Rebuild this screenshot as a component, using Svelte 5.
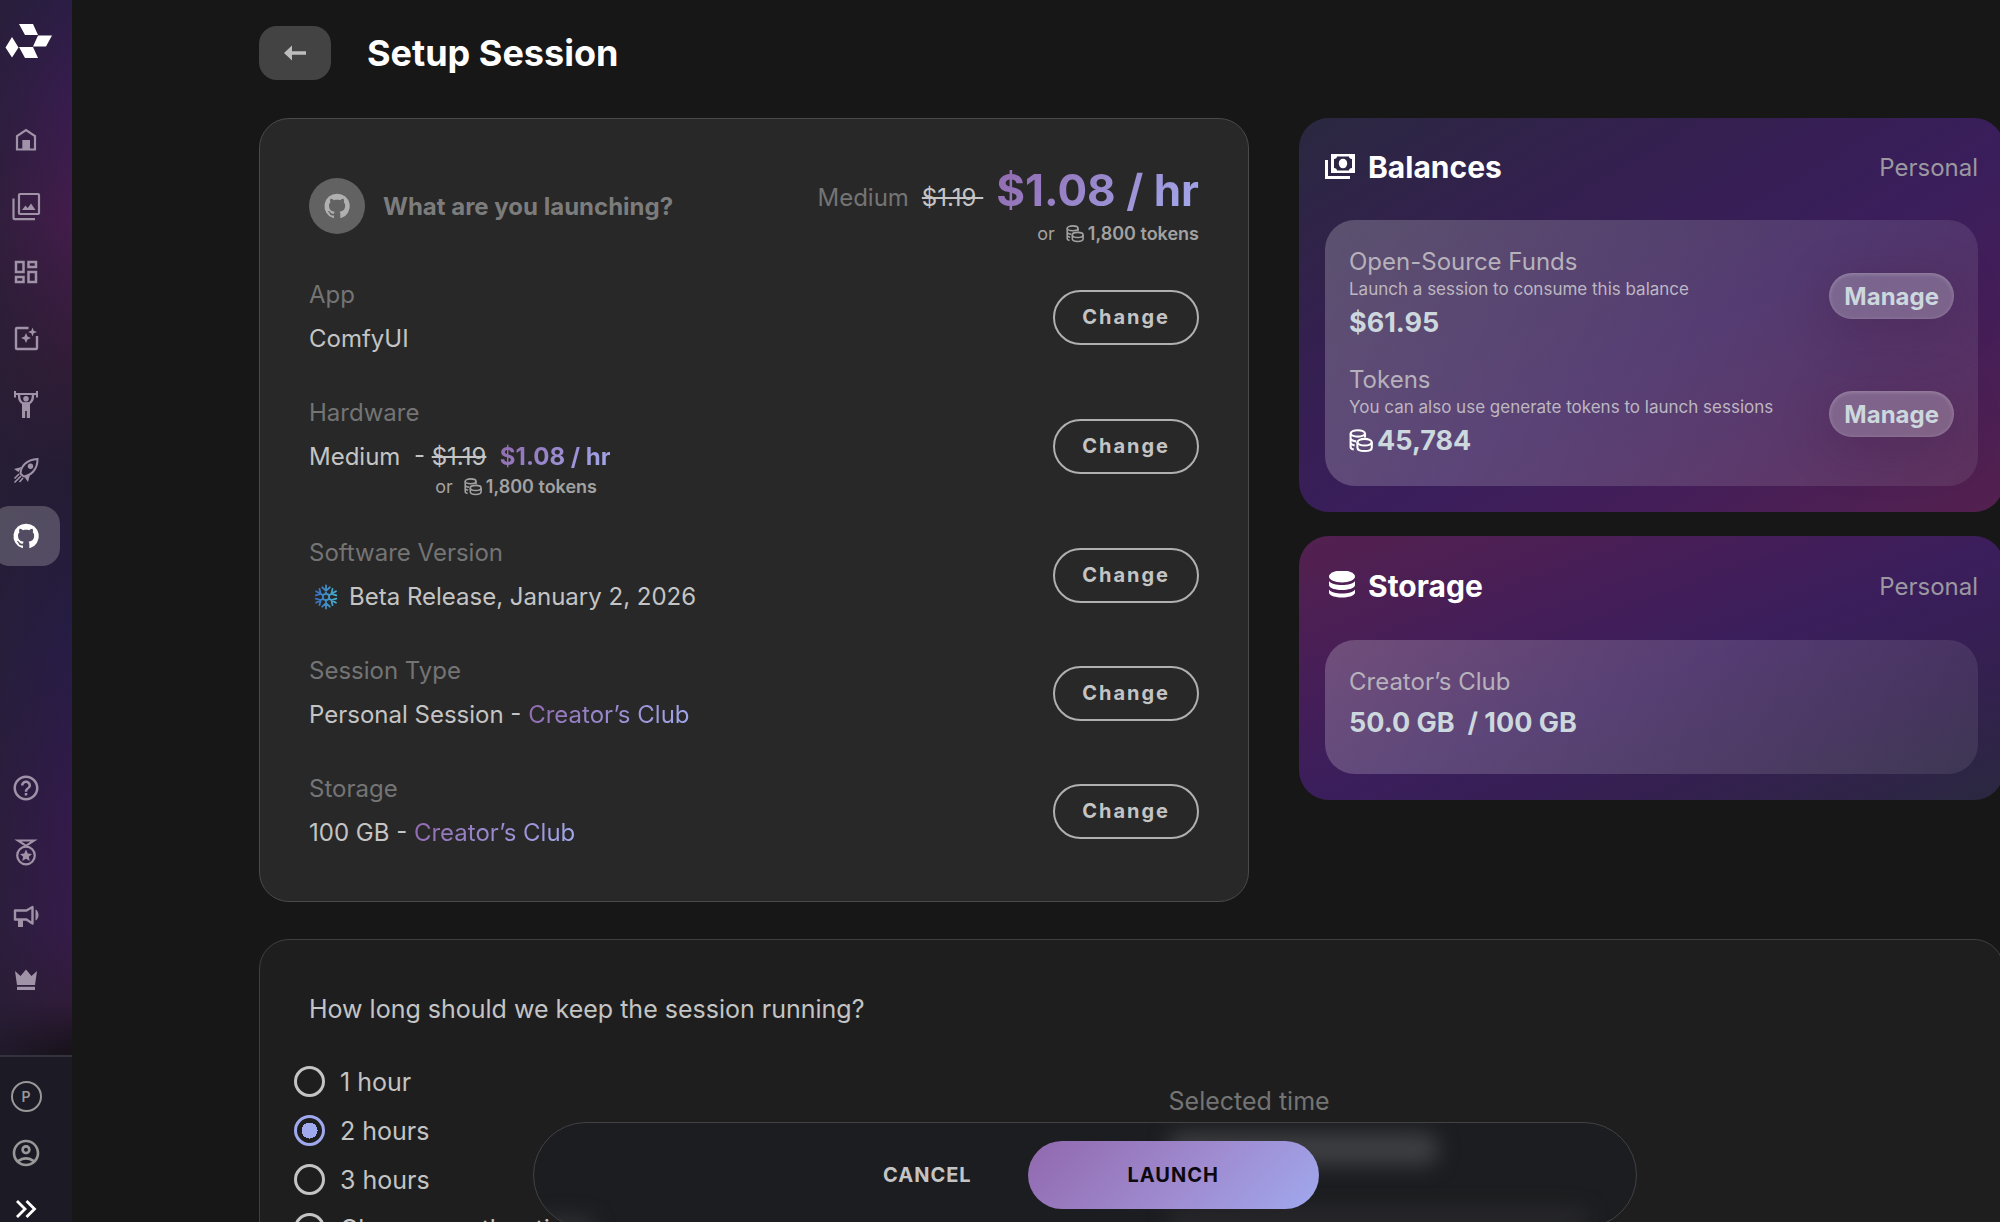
<script lang="ts">
  interface Item {
    icon: string;
    label: string;
    active?: boolean;
  }

  const navItems: Item[] = [
    { icon: "home", label: "Home" },
    { icon: "gallery", label: "Gallery" },
    { icon: "dashboard", label: "Dashboard" },
    { icon: "generate", label: "Generate" },
    { icon: "train", label: "Training" },
    { icon: "rocket", label: "Deploy" },
    { icon: "github", label: "Open source", active: true },
  ];

  const helpItems: Item[] = [
    { icon: "help", label: "Help" },
    { icon: "medal", label: "Rewards" },
    { icon: "campaign", label: "News" },
    { icon: "crown", label: "Upgrade" },
  ];

  const durations = ["1 hour", "2 hours", "3 hours", "Choose another time"];

  let duration = $state("2 hours");

  // one snowflake arm with its two barbs, turned by the given angle
  function flakeArm(degrees: number): string {
    const a = (degrees * Math.PI) / 180;
    const sin = Math.sin(a);
    const cos = Math.cos(a);
    const at = (r: number, side = 0) => `${13 + r * sin + side * cos} ${13 - r * cos + side * sin}`;
    return `M${at(3.2)}L${at(11.5)}M${at(9.7, -3.8)}L${at(6.2)}L${at(9.7, 3.8)}`;
  }
</script>

{#snippet icon(name: string, size = 30)}
  <svg class="icon" width={size} height={size} viewBox="0 0 30 30" fill="currentColor" aria-hidden="true">
    {#if name === "home"}
      <path d="M6 24.5V11.2L15 5l9 6.200v13.300z" fill="none" stroke="currentColor" stroke-width="2.200" />
      <path d="M11.300 15h7.700v9.500h-7.700z" />
    {:else if name === "gallery"}
      <rect x="8" y="3" width="20" height="20" rx="1" fill="none" stroke="currentColor" stroke-width="2.200" />
      <path d="M2.500 7.500V27a1.200 1.200 0 0 0 1.200 1.200H24" fill="none" stroke="currentColor" stroke-width="2.200" />
      <path d="M11 19l3.500-4.500 2.200 2.500 3.300-4.500L24.500 19z" />
    {:else if name === "dashboard"}
      <path
        transform="scale(1.25)"
        d="M19 5v2h-4V5h4M9 5v6H5V5h4m10 8v6h-4v-6h4M9 17v2H5v-2h4M21 3h-8v6h8V3zM11 3H3v10h8V3zm10 8h-8v10h8V11zm-10 4H3v6h8v-6z"
      />
    {:else if name === "generate"}
      <path d="M17.500 5H6a1 1 0 0 0-1 1v19a1 1 0 0 0 1 1h19a1 1 0 0 0 1-1V13" fill="none" stroke="currentColor" stroke-width="2.400" />
      <path d="M15 10l1.500 3.500 3.500 1.500-3.500 1.500L15 20l-1.500-3.500L10 15l3.500-1.500zM21.500 4.500l1.200 3.300 3.300 1.200-3.300 1.200-1.200 3.300-1.200-3.300L17 9l3.300-1.200z" />
    {:else if name === "train"}
      <path d="M3 2h2v2h20V2h2v6.500h-2V6H5v2.500H3z" />
      <circle cx="15" cy="9.800" r="2.800" />
      <path d="M8 6c0 5 1.500 7.500 4.500 8.500h5C20.500 13.500 22 11 22 6" fill="none" stroke="currentColor" stroke-width="2.400" />
      <path d="M11 13.500h8V29h-3.200v-7h-1.600v7H11z" />
    {:else if name === "rocket"}
      <path d="M11.500 20.500L9.500 18.500c.3-7 6-14 17-14.500.2 11-7 16.500-13.500 17.500z" fill="none" stroke="currentColor" stroke-width="2" />
      <circle cx="19.500" cy="11.200" r="2.700" />
      <path d="M10.500 12L3 14l4.500 3zM19 19.500L17 27l-3.200-4.500z" />
      <path d="M8 19l-4.500 4.500M10 21l-6.500 6.500M12 23l-3.500 4" fill="none" stroke="currentColor" stroke-width="1.600" />
    {:else if name === "github"}
      <path
        transform="translate(1.400 1.200) scale(1.140)"
        d="M12 1.270a11 11 0 00-3.480 21.460c.55.09.73-.28.73-.55v-1.840c-3.030.64-3.670-1.460-3.670-1.460-.55-1.290-1.280-1.650-1.280-1.650-.92-.65.1-.65.1-.65 1.100 0 1.730 1.100 1.730 1.100.92 1.650 2.570 1.200 3.210.92a2 2 0 01.64-1.470c-2.470-.27-5.040-1.190-5.040-5.500 0-1.100.46-2.100 1.200-2.840a3.760 3.760 0 010-2.930s.91-.28 3.110 1.100c1.800-.49 3.700-.49 5.500 0 2.100-1.380 3.020-1.100 3.020-1.100a3.760 3.760 0 01.1 2.930c.83.74 1.200 1.740 1.200 2.940 0 4.210-2.570 5.130-5.040 5.400.45.37.82.92.82 2.020v3.030c0 .27.1.64.73.55A11 11 0 0012 1.270"
      />
    {:else if name === "help"}
      <path
        transform="scale(1.25)"
        d="M11 18h2v-2h-2v2zm1-16C6.480 2 2 6.480 2 12s4.480 10 10 10 10-4.480 10-10S17.520 2 12 2zm0 18c-4.410 0-8-3.590-8-8s3.590-8 8-8 8 3.590 8 8-3.590 8-8 8zm0-14c-2.210 0-4 1.790-4 4h2c0-1.100.9-2 2-2s2 .9 2 2c0 2-3 1.750-3 5h2c0-2.250 3-2.500 3-5 0-2.210-1.790-4-4-4z"
      />
    {:else if name === "medal"}
      <circle cx="15" cy="18.500" r="8.800" fill="none" stroke="currentColor" stroke-width="2.200" />
      <path d="M7 3.500h16L15 8.800z" fill="none" stroke="currentColor" stroke-width="2.200" />
      <path d="M15 12.500l1.800 4 4.200.4-3.200 2.800 1 4.300-3.800-2.200-3.800 2.200 1-4.300L9 16.900l4.200-.4z" />
    {:else if name === "campaign"}
      <path d="M4 9.500h11.500l6-3.500v16.500l-6-4H4z" fill="none" stroke="currentColor" stroke-width="2.400" stroke-linejoin="round" />
      <path d="M7 19h5v7H7zM24.500 8.500c4 1.500 4 9.500 0 11z" />
    {:else if name === "crown"}
      <path d="M4 6l5.500 5L15 4.500l5.500 6.500L26 6l-2 14H6zM6 21.800h18V25H6z" />
    {:else if name === "account"}
      <path
        transform="scale(1.25)"
        d="M12 2C6.480 2 2 6.480 2 12s4.480 10 10 10 10-4.480 10-10S17.520 2 12 2M7.350 18.500C8.660 17.560 10.260 17 12 17s3.340.56 4.650 1.500c-1.310.94-2.910 1.500-4.650 1.500s-3.340-.56-4.650-1.500m10.790-1.380C16.450 15.800 14.320 15 12 15s-4.450.8-6.140 2.120C4.700 15.730 4 13.950 4 12c0-4.420 3.580-8 8-8s8 3.580 8 8c0 1.950-.7 3.730-1.860 5.120M12 6c-1.930 0-3.500 1.570-3.500 3.500S10.070 13 12 13s3.500-1.570 3.500-3.500S13.930 6 12 6m0 5c-.83 0-1.500-.67-1.500-1.500S11.170 8 12 8s1.500.67 1.500 1.500S12.830 11 12 11"
      />
    {:else if name === "expand"}
      <path d="M6 7l8 8-8 8M15.500 7l8 8-8 8" fill="none" stroke="currentColor" stroke-width="2.800" />
    {:else if name === "back"}
      <path d="M4 15l8-7.500v5.800h14v3.400H12v5.800z" />
    {:else if name === "coins"}
      <g fill="none" stroke="currentColor" stroke-width="2.600">
        <ellipse cx="11" cy="5.500" rx="9" ry="4" />
        <path d="M2 5.500v17c0 1.500 1.500 2.800 4 3.200M2 12c.5 1.500 3 3 7 3.500M2 17.500c.5 1.500 1.500 2.300 5 3M20 5.500v5" />
        <ellipse cx="19.500" cy="16.500" rx="9" ry="4.200" />
        <path d="M10.500 16.500V23c0 6 18 6 18 0v-6.500" />
      </g>
    {:else if name === "payments"}
      <path fill-rule="evenodd" d="M6 2h24v19H6zM9 7v9c1.800 0 3 1 3 2.500h12c0-1.500 1.200-2.500 3-2.500V7c-1.800 0-3-1-3-2.500H12C12 6 10.800 7 9 7z" />
      <ellipse cx="18" cy="11.500" rx="4.200" ry="4.800" />
      <path d="M0 8h3v16h22v3H0z" />
    {:else if name === "database"}
      <ellipse cx="17" cy="5.500" rx="13" ry="6" />
      <path d="M4 10c3 5.300 23 5.300 26 0v4.500c-2 6-24 6-26 0zM4 18.500c3 5.300 23 5.300 26 0V22c-2 6-24 6-26 0z" />
    {/if}
  </svg>
{/snippet}

{#snippet navLink(item: Item)}
  <a href="#{item.icon}" class="nav-link" class:active={item.active} aria-label={item.label}>
    {@render icon(item.icon)}
  </a>
{/snippet}

{#snippet tokens()}
  <div class="tokens">
    <span>or</span>
    <strong>{@render icon("coins", 18)}1,800 tokens</strong>
  </div>
{/snippet}

{#snippet changeButton(what: string)}
  <button type="button" class="change" aria-label="Change {what}">Change</button>
{/snippet}

<div class="app">
  <aside class="sidebar">
    <a href="#top" class="logo" aria-label="Start page">
      <svg width="48" height="36" viewBox="0 0 48 36" fill="#fff" aria-hidden="true">
        <path d="M14 0h14l5 11H20zM33 11.500h14L41 22.500H28zM7 13l6.500 10.500L7 33.500.5 23.500zM14 23h14l5 11H20z" />
      </svg>
    </a>
    <nav class="nav-main" aria-label="Main">
      {#each navItems as item}
        {@render navLink(item)}
      {/each}
    </nav>
    <nav class="nav-help" aria-label="Help">
      {#each helpItems as item}
        {@render navLink(item)}
      {/each}
    </nav>
    <div class="sidebar-footer">
      <button type="button" class="workspace" aria-label="Personal workspace">P</button>
      <button type="button" aria-label="Account">{@render icon("account", 32)}</button>
      <button type="button" class="expand" aria-label="Expand menu">{@render icon("expand")}</button>
    </div>
  </aside>

  <main>
    <header>
      <button type="button" class="back" aria-label="Back">{@render icon("back")}</button>
      <h1>Setup Session</h1>
    </header>

    <div class="columns">
      <section class="card setup">
        <div class="setup-head">
          <span class="avatar">{@render icon("github")}</span>
          <h2>What are you launching?</h2>
          <div class="price">
            <div class="price-line">
              <span class="muted">Medium</span>
              <s>$1.19&nbsp;</s>
              <span class="amount gradient">$1.08 / hr</span>
            </div>
            {@render tokens()}
          </div>
        </div>

        <div class="row">
          <div>
            <div class="label">App</div>
            <div class="value">ComfyUI</div>
          </div>
          {@render changeButton("app")}
        </div>
        <div class="row">
          <div>
            <div class="label">Hardware</div>
            <div class="value">
              Medium&nbsp; - <s>$1.19</s>&nbsp; <strong class="gradient">$1.08 / hr</strong>
            </div>
            <div class="row-tokens">{@render tokens()}</div>
          </div>
          {@render changeButton("hardware")}
        </div>
        <div class="row">
          <div>
            <div class="label">Software Version</div>
            <div class="value version">
              <svg width="26" height="26" viewBox="0 0 26 26" fill="none" stroke="url(#frost)" stroke-width="1.800" stroke-linecap="round" aria-hidden="true">
                <defs>
                  <linearGradient id="frost" gradientUnits="userSpaceOnUse" x1="0" y1="13" x2="26" y2="13">
                    <stop offset="0" stop-color="#3565c0" />
                    <stop offset="1" stop-color="#4ab8d0" />
                  </linearGradient>
                </defs>
                <circle cx="13" cy="13" r="3.200" />
                {#each [0, 60, 120, 180, 240, 300] as angle}
                  <path d={flakeArm(angle)} />
                {/each}
              </svg>
              Beta Release, January 2, 2026
            </div>
          </div>
          {@render changeButton("software version")}
        </div>
        <div class="row">
          <div>
            <div class="label">Session Type</div>
            <div class="value">Personal Session - <span class="gradient">Creator’s Club</span></div>
          </div>
          {@render changeButton("session type")}
        </div>
        <div class="row">
          <div>
            <div class="label">Storage</div>
            <div class="value">100 GB - <span class="gradient">Creator’s Club</span></div>
          </div>
          {@render changeButton("storage")}
        </div>
      </section>

      <div class="side">
        <section class="panel balances">
          <div class="panel-head">
            {@render icon("payments")}
            <h2>Balances</h2>
            <span>Personal</span>
          </div>
          <div class="glass">
            <div class="balance">
              <div>
                <div class="name">Open-Source Funds</div>
                <div class="hint">Launch a session to consume this balance</div>
                <div class="total">$61.95</div>
              </div>
              <button type="button" class="manage" aria-label="Manage funds">Manage</button>
            </div>
            <div class="balance">
              <div>
                <div class="name">Tokens</div>
                <div class="hint">You can also use generate tokens to launch sessions</div>
                <div class="total">{@render icon("coins", 24)}45,784</div>
              </div>
              <button type="button" class="manage" aria-label="Manage tokens">Manage</button>
            </div>
          </div>
        </section>

        <section class="panel storage">
          <div class="panel-head">
            {@render icon("database")}
            <h2>Storage</h2>
            <span>Personal</span>
          </div>
          <div class="glass">
            <div class="name">Creator’s Club</div>
            <div class="total">50.0 GB&nbsp; / 100 GB</div>
          </div>
        </section>
      </div>
    </div>

    <section class="card duration">
      <p id="duration-question">How long should we keep the session running?</p>
      <div class="duration-body">
        <div class="options" role="radiogroup" aria-labelledby="duration-question">
          {#each durations as option}
            <label>
              <input type="radio" name="duration" value={option} bind:group={duration} />
              {option}
            </label>
          {/each}
        </div>
        <div class="selected">Selected time</div>
      </div>
    </section>
  </main>

  <div class="action-bar">
    <span class="haze haze-time"></span>
    <span class="haze haze-note"></span>
    <span class="haze haze-option"></span>
    <button type="button" class="cancel">CANCEL</button>
    <button type="button" class="launch">LAUNCH</button>
  </div>
</div>

<style>
  :global(body) {
    background: #171717;
  }
  .app {
    display: flex;
    height: 100vh;
    overflow: hidden;
    position: relative;
    font-family: Inter, "Liberation Sans", sans-serif;
    font-size: 24px;
    color: #c4c4c4;
  }
  button {
    border: 0;
    padding: 0;
    background: none;
    color: inherit;
    font: inherit;
    cursor: pointer;
  }
  h1,
  h2,
  p {
    margin: 0;
  }
  .icon {
    display: block;
    flex: none;
  }
  strong {
    font-weight: 700;
  }

  .sidebar {
    flex: none;
    width: 72px;
    display: flex;
    flex-direction: column;
    background:
      linear-gradient(90deg, rgba(38, 31, 52, 0.6), rgba(38, 31, 52, 0)),
      linear-gradient(
        180deg,
        #2b1d45 0%,
        #371c4e 8%,
        #431c4b 18%,
        #311c36 30%,
        #241c34 39%,
        #261c44 52%,
        #321a4a 66%,
        #351b49 76%,
        #301b3a 82%,
        #18121c 86%
      );
  }
  .logo {
    height: 36px;
    padding: 24px 0 50px 5px;
  }
  .logo svg {
    display: block;
  }
  .nav-main,
  .nav-help {
    display: flex;
    flex-direction: column;
    gap: 6px;
  }
  .nav-help {
    gap: 4px;
    margin-top: auto;
    padding-bottom: 45px;
  }
  .nav-link {
    display: flex;
    align-items: center;
    justify-content: center;
    width: 68px;
    height: 60px;
    margin-left: -8px;
    border-radius: 18px;
    color: #a093a8;
  }
  .nav-link.active {
    background: rgba(255, 255, 255, 0.21);
    color: #fff;
  }
  .sidebar-footer {
    display: flex;
    flex-direction: column;
    align-items: center;
    gap: 25px;
    width: 52px;
    height: 141px;
    padding: 24px 20px 0 0;
    border-top: 2px solid #34323c;
    background: #1b1a25;
    color: #989898;
  }
  .workspace {
    flex: none;
    box-sizing: border-box;
    width: 31px;
    height: 31px;
    border: 2px solid #989898;
    border-radius: 50%;
    font-size: 14px;
    font-weight: 600;
  }
  .expand {
    color: #fff;
  }

  main {
    flex: 1;
    min-width: 0;
    padding: 26px 0 0 187px;
    margin-right: -4px;
  }
  header {
    display: flex;
    align-items: center;
    gap: 36px;
    height: 54px;
    margin-bottom: 38px;
  }
  .back {
    display: flex;
    align-items: center;
    justify-content: center;
    width: 72px;
    height: 54px;
    border-radius: 18px;
    background: #434343;
    color: #bdbdbd;
  }
  h1 {
    font-size: 36px;
    font-weight: 700;
    color: #fff;
  }
  .columns {
    display: grid;
    grid-template-columns: 990fr 705fr;
    gap: 50px;
    align-items: start;
  }
  .card {
    border: 1px solid #4a4a4a;
    border-radius: 30px;
    background: #282828;
  }
  .setup {
    display: flex;
    flex-direction: column;
    gap: 30px;
    padding: 46px 49px;
  }
  .setup-head {
    display: flex;
    align-items: center;
    gap: 18px;
    height: 78px;
  }
  .avatar {
    display: flex;
    align-items: center;
    justify-content: center;
    width: 56px;
    height: 56px;
    margin-top: 4px;
    border-radius: 50%;
    background: #626262;
    color: #b0b0b0;
  }
  .setup-head h2 {
    margin-top: 4px;
    font-size: 24px;
    font-weight: 700;
    color: #7c7c7c;
  }
  .price {
    margin-left: auto;
  }
  .price .tokens {
    margin-top: 6px;
  }
  .price-line {
    display: flex;
    align-items: baseline;
    justify-content: flex-end;
    gap: 13px;
  }
  .muted,
  .label {
    color: #747474;
  }
  .amount {
    font-size: 44px;
    font-weight: 700;
    line-height: 54px;
  }
  .gradient {
    background: linear-gradient(135deg, #9168ae, #a3abee);
    background-clip: text;
    color: transparent;
  }
  .tokens {
    display: flex;
    align-items: center;
    justify-content: flex-end;
    gap: 11px;
    font-size: 18px;
    line-height: 22px;
    color: #a2a2a2;
  }
  .tokens strong {
    display: flex;
    align-items: center;
    gap: 4px;
    font-weight: 600;
  }
  .row {
    display: flex;
    align-items: center;
    justify-content: space-between;
  }
  .label,
  .value {
    line-height: 44px;
  }
  .version {
    display: flex;
    align-items: center;
    gap: 10px;
    padding-left: 4px;
  }
  .row-tokens {
    width: 288px;
    margin-top: -3px;
    padding-bottom: 3px;
  }
  .change {
    box-sizing: border-box;
    height: 55px;
    padding: 0 27px;
    border: 2px solid #b0b0b0;
    border-radius: 28px;
    font-size: 20px;
    font-weight: 700;
    letter-spacing: 2px;
  }

  .side {
    display: flex;
    flex-direction: column;
    gap: 24px;
  }
  .panel {
    padding: 0 26px 26px;
    border-radius: 30px;
  }
  .balances {
    background: linear-gradient(150deg, #2a2840 0%, #34204f 28%, #3a1e5c 55%, #451e58 75%, #54214f 100%);
  }
  .storage {
    background: linear-gradient(160deg, #54214f 0%, #461e58 30%, #3a1e5c 52%, #34204f 75%, #2a2840 100%);
  }
  .panel-head {
    display: flex;
    align-items: center;
    gap: 13px;
    height: 98px;
    padding-bottom: 4px;
    color: #fff;
  }
  .storage .panel-head {
    height: 100px;
  }
  .panel-head h2 {
    font-size: 30px;
    font-weight: 700;
  }
  .panel-head span {
    margin-left: auto;
    color: #9c98a0;
  }
  .glass {
    padding: 25px 24px 21px;
    border-radius: 30px;
    background: linear-gradient(110deg, rgba(255, 255, 255, 0.21), rgba(255, 255, 255, 0.08));
  }
  .balances .glass {
    display: flex;
    flex-direction: column;
    gap: 16px;
  }
  .storage .glass {
    padding-bottom: 27px;
  }
  .balance {
    display: flex;
    align-items: center;
    justify-content: space-between;
  }
  .name {
    line-height: 34px;
    color: #b7b1bb;
  }
  .hint {
    font-size: 17px;
    line-height: 20px;
    color: #bdb7c1;
  }
  .total {
    display: flex;
    align-items: center;
    gap: 4px;
    font-size: 27px;
    font-weight: 700;
    line-height: 48px;
    color: #ccd8dd;
  }
  .total .icon {
    color: #fff;
  }
  .manage {
    height: 46px;
    padding: 0 15px;
    border-radius: 23px;
    background: rgba(255, 255, 255, 0.23);
    box-shadow:
      inset 0 1px 4px rgba(255, 255, 255, 0.25),
      0 10px 50px rgba(60, 20, 60, 0.3);
    font-weight: 700;
    color: #ccd8dd;
  }

  .duration {
    margin-top: 37px;
    padding: 49px 49px 60px;
    background: #1e1e1e;
    border-color: #404040;
    font-size: 25px;
  }
  .duration p {
    line-height: 40px;
  }
  .duration-body {
    display: grid;
    grid-template-columns: 859fr 785fr;
    margin-top: 28px;
  }
  .options label {
    display: flex;
    align-items: center;
    gap: 15px;
    height: 49px;
    margin-left: -15px;
  }
  .options input {
    appearance: none;
    box-sizing: border-box;
    width: 31px;
    height: 31px;
    margin: 0;
    border: 3px solid #c4c4c4;
    border-radius: 50%;
  }
  .options input:checked {
    border-color: #a0a8ee;
    background: radial-gradient(circle, #a0a8ee 8px, transparent 8px);
  }
  .selected {
    padding-top: 28px;
    line-height: 32px;
    color: #747474;
  }

  .action-bar {
    position: absolute;
    left: 533px;
    right: 363px;
    bottom: -6px;
    box-sizing: border-box;
    height: 106px;
    display: flex;
    align-items: center;
    gap: 56px;
    padding-left: 349px;
    overflow: hidden;
    border: 1px solid #424246;
    border-radius: 53px;
    background: #1c1d20;
    font-size: 20px;
    font-weight: 700;
  }
  .action-bar button {
    position: relative;
    letter-spacing: 1px;
  }
  .launch {
    width: 291px;
    height: 68px;
    border-radius: 34px;
    background: linear-gradient(135deg, #9168ae, #9f8bd0 55%, #a0a8ee);
    color: #0c0a10;
  }
  .haze {
    position: absolute;
    border-radius: 14px;
    filter: blur(10px);
  }
  .haze-time {
    left: 634px;
    top: 10px;
    width: 270px;
    height: 32px;
    background: #3e3f42;
  }
  .haze-note {
    left: 634px;
    top: 86px;
    width: 420px;
    height: 20px;
    background: #29292c;
  }
  .haze-option {
    left: 0;
    bottom: -10px;
    width: 60px;
    height: 20px;
    background: #303134;
  }
</style>
